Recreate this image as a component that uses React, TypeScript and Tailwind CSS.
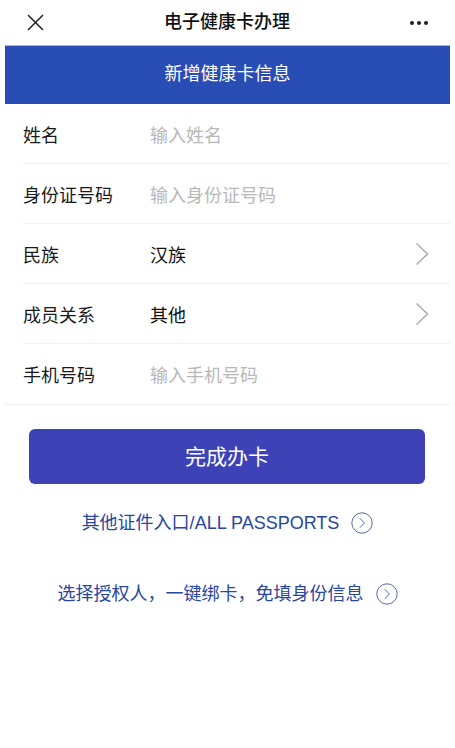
const font = { fontFamily: '"Liberation Sans", "Noto Sans CJK SC", sans-serif' };

function Chevron() {
  return (
    <svg width="14" height="24" viewBox="0 0 14 24" fill="none" className="shrink-0">
      <path d="M1.5 1.5 L12.5 12 L1.5 22.5" stroke="#a8a8a8" strokeWidth="1.4" />
    </svg>
  );
}

function CircleArrow() {
  return (
    <svg width="22" height="22" viewBox="0 0 22 22" fill="none" className="shrink-0">
      <circle cx="11" cy="11" r="10.2" stroke="#5a6aa8" strokeWidth="1" />
      <path d="M8.8 6.2 L13.4 11 L8.8 15.8" stroke="#5a6aa8" strokeWidth="1" />
    </svg>
  );
}

type Row = { label: string; value: string; placeholder?: boolean; arrow?: boolean };

const rows: Row[] = [
  { label: "姓名", value: "输入姓名", placeholder: true },
  { label: "身份证号码", value: "输入身份证号码", placeholder: true },
  { label: "民族", value: "汉族", arrow: true },
  { label: "成员关系", value: "其他", arrow: true },
  { label: "手机号码", value: "输入手机号码", placeholder: true },
];

export default function App() {
  return (
    <div className="w-[455px] h-[748px] bg-white overflow-hidden" style={font}>
      {/* nav bar */}
      <div className="h-[45px] flex items-center justify-between pl-[27px] pr-[27px]">
        <svg width="17" height="17" viewBox="0 0 17 17" fill="none">
          <path d="M1 1 L16 16 M16 1 L1 16" stroke="#222" strokeWidth="1.5" />
        </svg>
        <div className="text-[18px] font-medium text-[#111]">电子健康卡办理</div>
        <div className="flex gap-[3px] items-center">
          <span className="w-[4px] h-[4px] rounded-full bg-[#222]" />
          <span className="w-[4px] h-[4px] rounded-full bg-[#222]" />
          <span className="w-[4px] h-[4px] rounded-full bg-[#222]" />
        </div>
      </div>

      <div className="mx-[5px]">
        <div className="h-[59px] pb-[2px] bg-[#284db4] border-t border-[#9fb4e6] flex items-center justify-center text-white text-[18px]">
          新增健康卡信息
        </div>

        <div className="border-b border-[#eeeeee]">
          {rows.map((r, i) => (
            <div key={r.label} className="pl-[18px]">
              <div
                className={`h-[60px] flex items-center pr-[21px] ${i < rows.length - 1 ? "border-b border-[#efefef]" : ""}`}
              >
                <div className="w-[127px] pt-[5px] text-[18px] text-[#1a1a1a]">{r.label}</div>
                <div className={`flex-1 pt-[5px] text-[18px] ${r.placeholder ? "text-[#b8b8b8]" : "text-[#111]"}`}>{r.value}</div>
                {r.arrow && <Chevron />}
              </div>
            </div>
          ))}
        </div>
      </div>

      <div className="px-[29px] pt-[24px]">
        <button className="w-[396px] h-[55px] rounded-[6px] bg-[#3d43b6] text-white text-[21px] flex items-center justify-center">
          完成办卡
        </button>
      </div>

      <div className="h-[24px] flex items-center justify-center gap-[12px] mt-[27px] text-[18px] text-[#27479f]">
        <span>其他证件入口/ALL PASSPORTS</span>
        <CircleArrow />
      </div>

      <div className="h-[24px] flex items-center justify-center gap-[12px] mt-[47px] text-[18px] text-[#27479f]">
        <span>选择授权人，一键绑卡，免填身份信息</span>
        <CircleArrow />
      </div>
    </div>
  );
}
